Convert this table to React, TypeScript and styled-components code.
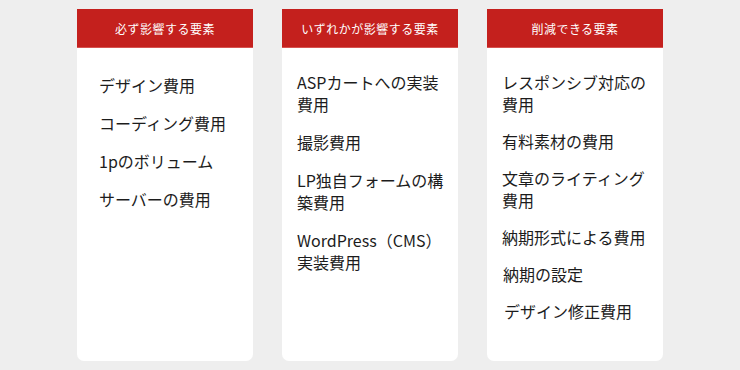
import { createGlobalStyle, styled } from "styled-components";

type Column = {
  title: string;
  inset: number;
  top: number;
  gap: number;
  items: { label: string; indent?: number }[];
};

const columns: Column[] = [
  {
    title: "必ず影響する要素",
    inset: 22,
    top: 26,
    gap: 16,
    items: [
      { label: "デザイン費用" },
      { label: "コーディング費用" },
      { label: "1pのボリューム" },
      { label: "サーバーの費用" },
    ],
  },
  {
    title: "いずれかが影響する要素",
    inset: 15,
    top: 23,
    gap: 16,
    items: [
      { label: "ASPカートへの実装費用" },
      { label: "撮影費用" },
      { label: "LP独自フォームの構築費用" },
      { label: "WordPress（CMS）実装費用" },
    ],
  },
  {
    title: "削減できる要素",
    inset: 15,
    top: 23,
    gap: 15,
    items: [
      { label: "レスポンシブ対応の費用" },
      { label: "有料素材の費用" },
      { label: "文章のライティング費用" },
      { label: "納期形式による費用" },
      { label: "納期の設定", indent: 1 },
      { label: "デザイン修正費用", indent: 2 },
    ],
  },
];

function App() {
  return (
    <>
      <GlobalStyle />
      <Page>
        {columns.map((col) => (
          <Card key={col.title}>
            <Header>{col.title}</Header>
            <List $inset={col.inset} $top={col.top} $gap={col.gap}>
              {col.items.map((item) => (
                <Item key={item.label} $indent={item.indent ?? 0}>
                  {item.label}
                </Item>
              ))}
            </List>
          </Card>
        ))}
      </Page>
    </>
  );
}

const GlobalStyle = createGlobalStyle`
  html, body {
    margin: 0;
    background: #eeeeee;
  }
  body {
    font-family: "Noto Sans CJK JP", "Noto Sans", sans-serif;
  }
`;
const Page = styled.div`
  width: 740px;
  height: 370px;
  box-sizing: border-box;
  padding-top: 9px;
  display: flex;
  justify-content: center;
  gap: 29px;
  background: #eeeeee;
`;
const Card = styled.div`
  width: 176px;
  height: 352px;
  background: #fff;
  border-radius: 0 0 7px 7px;
  display: flex;
  flex-direction: column;
  overflow: hidden;
`;
const Header = styled.div`
  height: 39px;
  background: #c4201d;
  border-bottom: 1px solid #d6524f;
  box-sizing: border-box;
  color: #fff;
  font-size: 12px;
  letter-spacing: 0.04em;
  display: flex;
  justify-content: center;
  align-items: center;
  padding-top: 1px;
`;
const List = styled.ul<{ $inset: number; $top: number; $gap: number }>`
  list-style: none;
  margin: 0;
  padding: ${(p) => p.$top}px 12px 0 ${(p) => p.$inset}px;
  display: flex;
  flex-direction: column;
  gap: ${(p) => p.$gap}px;
`;
const Item = styled.li<{ $indent: number }>`
  font-size: 16px;
  line-height: 22px;
  color: #1c1c1c;
  padding-left: ${(p) => p.$indent}px;
  word-break: break-all;
`;

export default App;
